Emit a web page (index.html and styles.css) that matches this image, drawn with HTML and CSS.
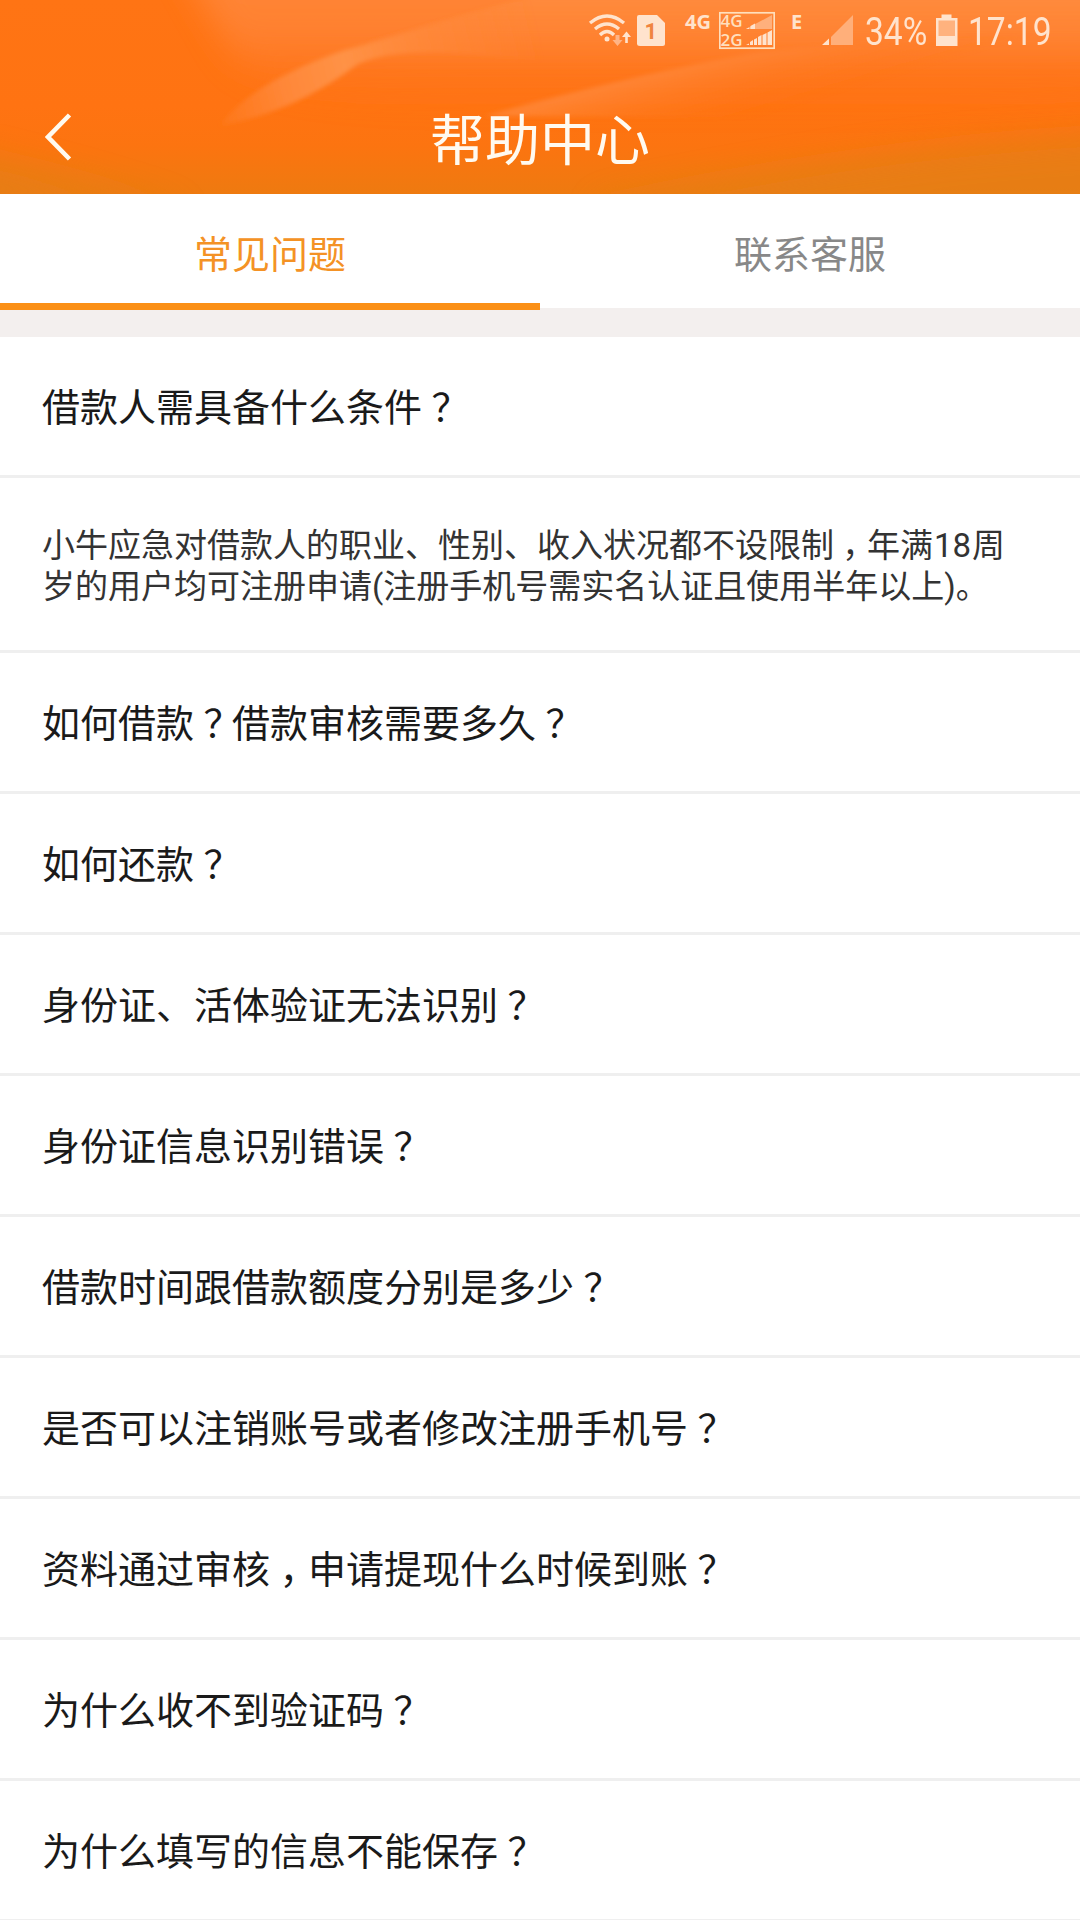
FILE: index.html
```html
<!DOCTYPE html>
<html lang="zh-CN">
<head>
    <meta charset="UTF-8">
    <meta name="viewport" content="width=device-width, initial-scale=1.0">
    <title>帮助中心</title>
    <link rel="stylesheet" href="styles.css">
</head>
<body>
    <header class="header">
        <svg class="header-bg" viewBox="0 0 1080 194" preserveAspectRatio="none">
            <defs>
                <linearGradient id="base" x1="0" y1="0" x2="0" y2="1">
                    <stop offset="0" stop-color="#ff7414"/>
                    <stop offset="0.55" stop-color="#ff7312"/>
                    <stop offset="0.75" stop-color="#fc7410"/>
                    <stop offset="1" stop-color="#ee7a10"/>
                </linearGradient>
                <linearGradient id="sky" x1="0" y1="0" x2="0" y2="1">
                    <stop offset="0" stop-color="#ff8c42"/>
                    <stop offset="0.5" stop-color="#ff8438"/>
                    <stop offset="1" stop-color="#ff7018" stop-opacity="0"/>
                </linearGradient>
                <linearGradient id="beam" gradientUnits="userSpaceOnUse" x1="225" y1="120" x2="540" y2="40">
                    <stop offset="0" stop-color="#ff8430" stop-opacity="0.3"/>
                    <stop offset="0.2" stop-color="#ff8738"/>
                    <stop offset="0.4" stop-color="#ff9246"/>
                    <stop offset="0.65" stop-color="#ff8a3c" stop-opacity="0.7"/>
                    <stop offset="1" stop-color="#ff8436" stop-opacity="0"/>
                </linearGradient>
                <linearGradient id="top-light" x1="0" y1="0" x2="0" y2="1">
                    <stop offset="0" stop-color="#ff9144"/>
                    <stop offset="1" stop-color="#ff8638" stop-opacity="0"/>
                </linearGradient>
                <linearGradient id="beam2" gradientUnits="userSpaceOnUse" x1="700" y1="60" x2="720" y2="128">
                    <stop offset="0" stop-color="#ff8c42"/>
                    <stop offset="1" stop-color="#ff7418" stop-opacity="0"/>
                </linearGradient>
                <filter id="soft" x="-10%" y="-30%" width="120%" height="160%"><feGaussianBlur stdDeviation="16"/></filter>
                <filter id="edge" x="-10%" y="-20%" width="120%" height="140%"><feGaussianBlur stdDeviation="2"/></filter>
            </defs>
            <rect width="1080" height="194" fill="url(#base)"/>
            <path d="M180 -40H1120V90C980 110 820 112 640 110C480 105 290 110 235 60Z" fill="url(#sky)" opacity="0.8" filter="url(#soft)"/>
            <path d="M370 42C440 22 490 6 550 -8H1100V74H600C500 74 430 72 350 68Z" fill="url(#top-light)" opacity="0.6" filter="url(#edge)"/>
            <path d="M220 126C240 96 290 68 345 50C410 32 480 10 540 -4H640L560 64C480 54 400 44 358 64C320 92 280 114 220 126Z" fill="url(#beam)" filter="url(#edge)"/>
            <path d="M485 116C560 94 680 66 760 52C860 42 980 38 1090 30V72C980 90 860 102 760 118Z" fill="url(#beam2)" opacity="0.65" filter="url(#edge)"/>
            <path d="M-60 145C20 165 90 180 190 215H-60Z" fill="#e57f12" opacity="0.7" filter="url(#soft)"/>
            <path d="M600 205C760 172 930 142 1130 134V230H600Z" fill="#e57f12" opacity="0.8" filter="url(#soft)"/>
        </svg>

        <div class="status-bar">
            <!-- wifi -->
            <svg class="icon-wifi" width="44" height="60" viewBox="0 0 44 60" fill="none" stroke="#ffe3cd" stroke-width="3.3">
                <path d="M2 23Q19 9 36 23M7 29Q19 19 31 29M12 35Q19 28 26 35"/>
                <circle cx="19" cy="39" r="2.5" fill="#ffe3cd" stroke="none"/>
                <path d="M38.500 43V36" stroke-width="2.600"/>
                <path d="M34 37L38.500 31.500L43 37Z" fill="#ffe3cd" stroke="none"/>
                <path d="M27.500 35H31.500V40H34.500L29.500 46L24.500 40H27.500Z" fill="#ffb486" stroke="none"/>
            </svg>
            <!-- sim 1 -->
            <svg class="icon-sim" width="28" height="60" viewBox="0 0 28 60">
                <path d="M2 15H20L28 23V43.500Q28 46 25.500 46H3Q0 46 0 43.500V17Q0 15 2 15Z" fill="#ffe3cd"/>
                <text x="7.500" y="39" font-size="22" font-weight="bold" fill="#f08440">1</text>
            </svg>
            <span class="net net-4g">4G</span>
            <!-- dual network box -->
            <svg class="icon-dual" width="56" height="60" viewBox="0 0 56 60">
                <rect x="0.800" y="12.800" width="54.400" height="35.400" fill="none" stroke="#ffdfbd" stroke-width="1.700"/>
                <text x="1.500" y="26.500" class="dual-text">4G</text>
                <text x="1.500" y="46" class="dual-text">2G</text>
                <path d="M27 29L53 15V29Z" fill="#ffb07c"/>
                <path d="M27 29L30 27.500V29ZM31.500 29V26L36 23.500V29Z" fill="#ffe3cd"/>
                <path d="M27 45L30 43.500V45ZM31 45V42L34 40V45ZM35 45V39.500L38 38V45ZM39 45V37L42.500 35V45ZM43.500 45V35L47.500 33V45ZM48.500 45V32.500L53 30V45Z" fill="#ffe3cd"/>
            </svg>
            <span class="net net-e">E</span>
            <!-- signal -->
            <svg class="icon-signal" width="32" height="60" viewBox="0 0 32 60">
                <path d="M9 45V37L31 15V45Z" fill="#ffaf7a"/>
                <path d="M0 45L7 38.500V45Z" fill="#ffe3cd"/>
            </svg>
            <span class="status-text percent">34%</span>
            <!-- battery -->
            <svg class="icon-battery" width="22" height="60" viewBox="0 0 22 60">
                <path d="M0 18H5.500V14.500H15.500V18H21.500V46H0Z" fill="#ffe3cd"/>
                <rect x="2.500" y="20.500" width="16.500" height="15.500" fill="#ffb27e"/>
            </svg>
            <span class="status-text clock">17:19</span>
        </div>

        <div class="title-bar">
            <svg class="back" width="28" height="48" viewBox="0 0 28 48">
                <path d="M24.500 2L3 24L24.500 46" fill="none" stroke="#fffaf0" stroke-width="4.600"/>
            </svg>
            <h1>帮助中心</h1>
        </div>
    </header>

    <nav class="tabs">
        <a class="tab active">常见问题</a>
        <a class="tab">联系客服</a>
    </nav>

    <main class="faq">
        <div class="question">借款人需具备什么条件<span class="mark">？</span></div>
        <div class="answer">小牛应急对借款人的职业、性别、收入状况都不设限制<span class="mark">，</span>年满<span class="num">18</span>周<br>岁的用户均可注册申请(注册手机号需实名认证且使用半年以上)。</div>
        <div class="question">如何借款<span class="mark">？</span>借款审核需要多久<span class="mark">？</span></div>
        <div class="question">如何还款<span class="mark">？</span></div>
        <div class="question">身份证、活体验证无法识别<span class="mark">？</span></div>
        <div class="question">身份证信息识别错误<span class="mark">？</span></div>
        <div class="question">借款时间跟借款额度分别是多少<span class="mark">？</span></div>
        <div class="question">是否可以注销账号或者修改注册手机号<span class="mark">？</span></div>
        <div class="question">资料通过审核<span class="mark">，</span>申请提现什么时候到账<span class="mark">？</span></div>
        <div class="question">为什么收不到验证码<span class="mark">？</span></div>
        <div class="question">为什么填写的信息不能保存<span class="mark">？</span></div>
    </main>
</body>
</html>
```

FILE: styles.css
```css
* {
    box-sizing: border-box;
}

body {
    margin: 0;
    height: 1920px;
    overflow: hidden;
    background-color: #fff;
    font-family: Roboto, "Noto Sans CJK SC", sans-serif;
    color: #1a1a1a;
}

.header {
    position: relative;
    height: 194px;
    overflow: hidden;
    background-color: #ff7414;
}

.header-bg {
    position: absolute;
    top: 0;
    left: 0;
    width: 100%;
    height: 100%;
}

.status-bar {
    position: relative;
    display: flex;
    height: 60px;
    padding-left: 588px;
    color: #ffe3cd;
}

.status-bar svg {
    flex-shrink: 0;
}

.icon-sim {
    margin-left: 5px;
}

.net {
    flex-shrink: 0;
    font-family: "Open Sans", sans-serif;
    font-size: 20px;
    font-weight: bold;
    line-height: 20px;
    padding-top: 12px;
}

.net-4g {
    width: 34px;
    margin-left: 20px;
}

.net-e {
    width: 12px;
    margin-left: 16px;
}

.dual-text {
    font-family: "Open Sans", sans-serif;
    font-size: 17px;
    font-weight: 600;
    fill: #ffdfbd;
}

.icon-signal {
    margin-left: 19px;
}

.status-text {
    flex-shrink: 0;
    font-size: 39px;
    line-height: 64px;
    transform: scaleX(0.86);
    transform-origin: left;
}

.percent {
    width: 62px;
    margin-left: 11px;
}

.icon-battery {
    margin-left: 9px;
}

.clock {
    margin-left: 10px;
}

.title-bar {
    position: relative;
    display: flex;
    align-items: center;
    height: 134px;
    padding: 0 44px 0 45px;
}

.back {
    flex-shrink: 0;
    margin-top: 20px;
}

h1 {
    flex: 1;
    margin: 27px 29px 0 0;
    font-size: 55px;
    font-weight: normal;
    line-height: 80px;
    text-align: center;
    color: #fffaf0;
}

.tabs {
    display: flex;
    height: 114px;
    margin-bottom: 29px;
    box-shadow: 0 29px 0 #f3efee;
}

.tab {
    flex: 1;
    height: 116px;
    font-size: 38px;
    line-height: 122px;
    text-align: center;
    color: #888;
}

.tab.active {
    border-bottom: 7px solid #fb9017;
    color: #f49225;
}

.question {
    height: 141px;
    padding-left: 42px;
    border-bottom: 3px solid #efefef;
    font-size: 38px;
    line-height: 143px;
    white-space: nowrap;
}

.answer {
    height: 175px;
    padding: 47px 0 0 42px;
    border-bottom: 3px solid #efefef;
    font-size: 33px;
    line-height: 41px;
    white-space: nowrap;
    color: #333;
}

/* full-width punctuation sits in the middle of its cell */
.mark {
    margin: 0 0.25em;
    font-feature-settings: "halt";
}

.num {
    margin: 0 1px;
}
```
